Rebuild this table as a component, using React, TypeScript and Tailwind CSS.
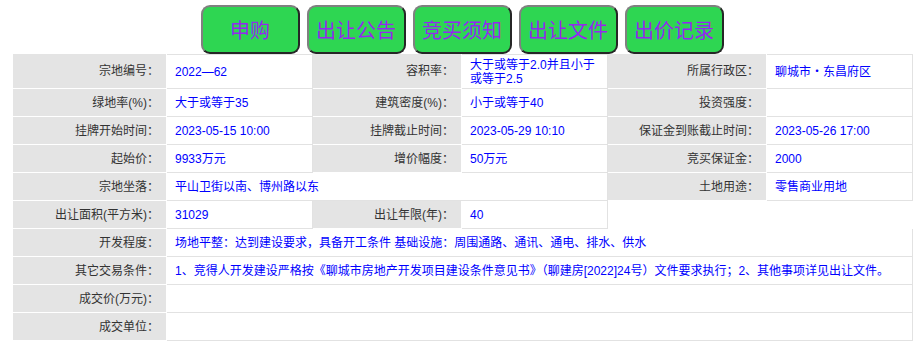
import React from 'react';

const buttons = ['申购', '出让公告', '竞买须知', '出让文件', '出价记录'];

const Label = ({ children, tall }: { children: React.ReactNode; tall?: boolean }) => (
    <div className={`flex items-center justify-end pr-[7px] bg-[#e4e4e4] border-b border-r border-white text-[#333] ${tall ? 'h-[35px]' : 'h-[28px]'}`}>
        {children}
    </div>
);

const Value = ({ children, span, top }: { children?: React.ReactNode; span?: string; top?: boolean }) => (
    <div className={`flex items-center pl-[8px] bg-white border-b border-r border-[#e2e2e2] text-[#0000ff] leading-[14px] ${top ? 'border-t' : ''} ${span ?? ''}`}>
        {children}
    </div>
);

const App = () => {
    return (
        <div className="w-[922px] h-[352px] bg-white font-['Liberation_Sans','Noto_Sans_CJK_SC',sans-serif] text-[12px]">
            <div className="flex justify-center gap-[7px] pt-[5px] pl-[2px]">
                {buttons.map(b => (
                    <div
                        key={b}
                        className="w-[99px] h-[49px] flex items-center justify-center rounded-[9px] bg-[#2ed652] border-2 border-t-[#808080] border-l-[#808080] border-b-[#262626] border-r-[#262626] text-[20px] text-[#9428f0] font-['Noto_Sans_CJK_SC',sans-serif]"
                    >
                        {b}
                    </div>
                ))}
            </div>

            <div className="ml-[13px] w-[900px] grid grid-cols-[154px_146px_149px_146px_159px_146px]">
                {/* row 1 */}
                <div className="contents">
                    <Label tall>宗地编号：</Label>
                    <Value top>2022—62</Value>
                    <Label tall>容积率：</Label>
                    <Value top>大于或等于2.0并且小于<br />或等于2.5</Value>
                    <Label tall>所属行政区：</Label>
                    <Value top>聊城市・东昌府区</Value>
                </div>

                <Label>绿地率(%)：</Label>
                <Value>大于或等于35</Value>
                <Label>建筑密度(%)：</Label>
                <Value>小于或等于40</Value>
                <Label>投资强度：</Label>
                <Value />

                <Label>挂牌开始时间：</Label>
                <Value>2023-05-15 10:00</Value>
                <Label>挂牌截止时间：</Label>
                <Value>2023-05-29 10:10</Value>
                <Label>保证金到账截止时间：</Label>
                <Value>2023-05-26 17:00</Value>

                <Label>起始价：</Label>
                <Value>9933万元</Value>
                <Label>增价幅度：</Label>
                <Value>50万元</Value>
                <Label>竞买保证金：</Label>
                <Value>2000</Value>

                <Label>宗地坐落：</Label>
                <Value span="col-span-3">平山卫街以南、博州路以东</Value>
                <Label>土地用途：</Label>
                <Value>零售商业用地</Value>

                <Label>出让面积(平方米)：</Label>
                <Value>31029</Value>
                <Label>出让年限(年)：</Label>
                <Value>40</Value>
                <div className="col-span-2" />

                <Label>开发程度：</Label>
                <Value span="col-span-5">场地平整：达到建设要求，具备开工条件 基础设施：周围通路、通讯、通电、排水、供水</Value>

                <Label>其它交易条件：</Label>
                <Value span="col-span-5">1、竞得人开发建设严格按《聊城市房地产开发项目建设条件意见书》（聊建房[2022]24号）文件要求执行；2、其他事项详见出让文件。</Value>

                <Label>成交价(万元)：</Label>
                <Value span="col-span-5" />

                <Label>成交单位：</Label>
                <Value span="col-span-5" />
            </div>
        </div>
    );
};

export default App;
